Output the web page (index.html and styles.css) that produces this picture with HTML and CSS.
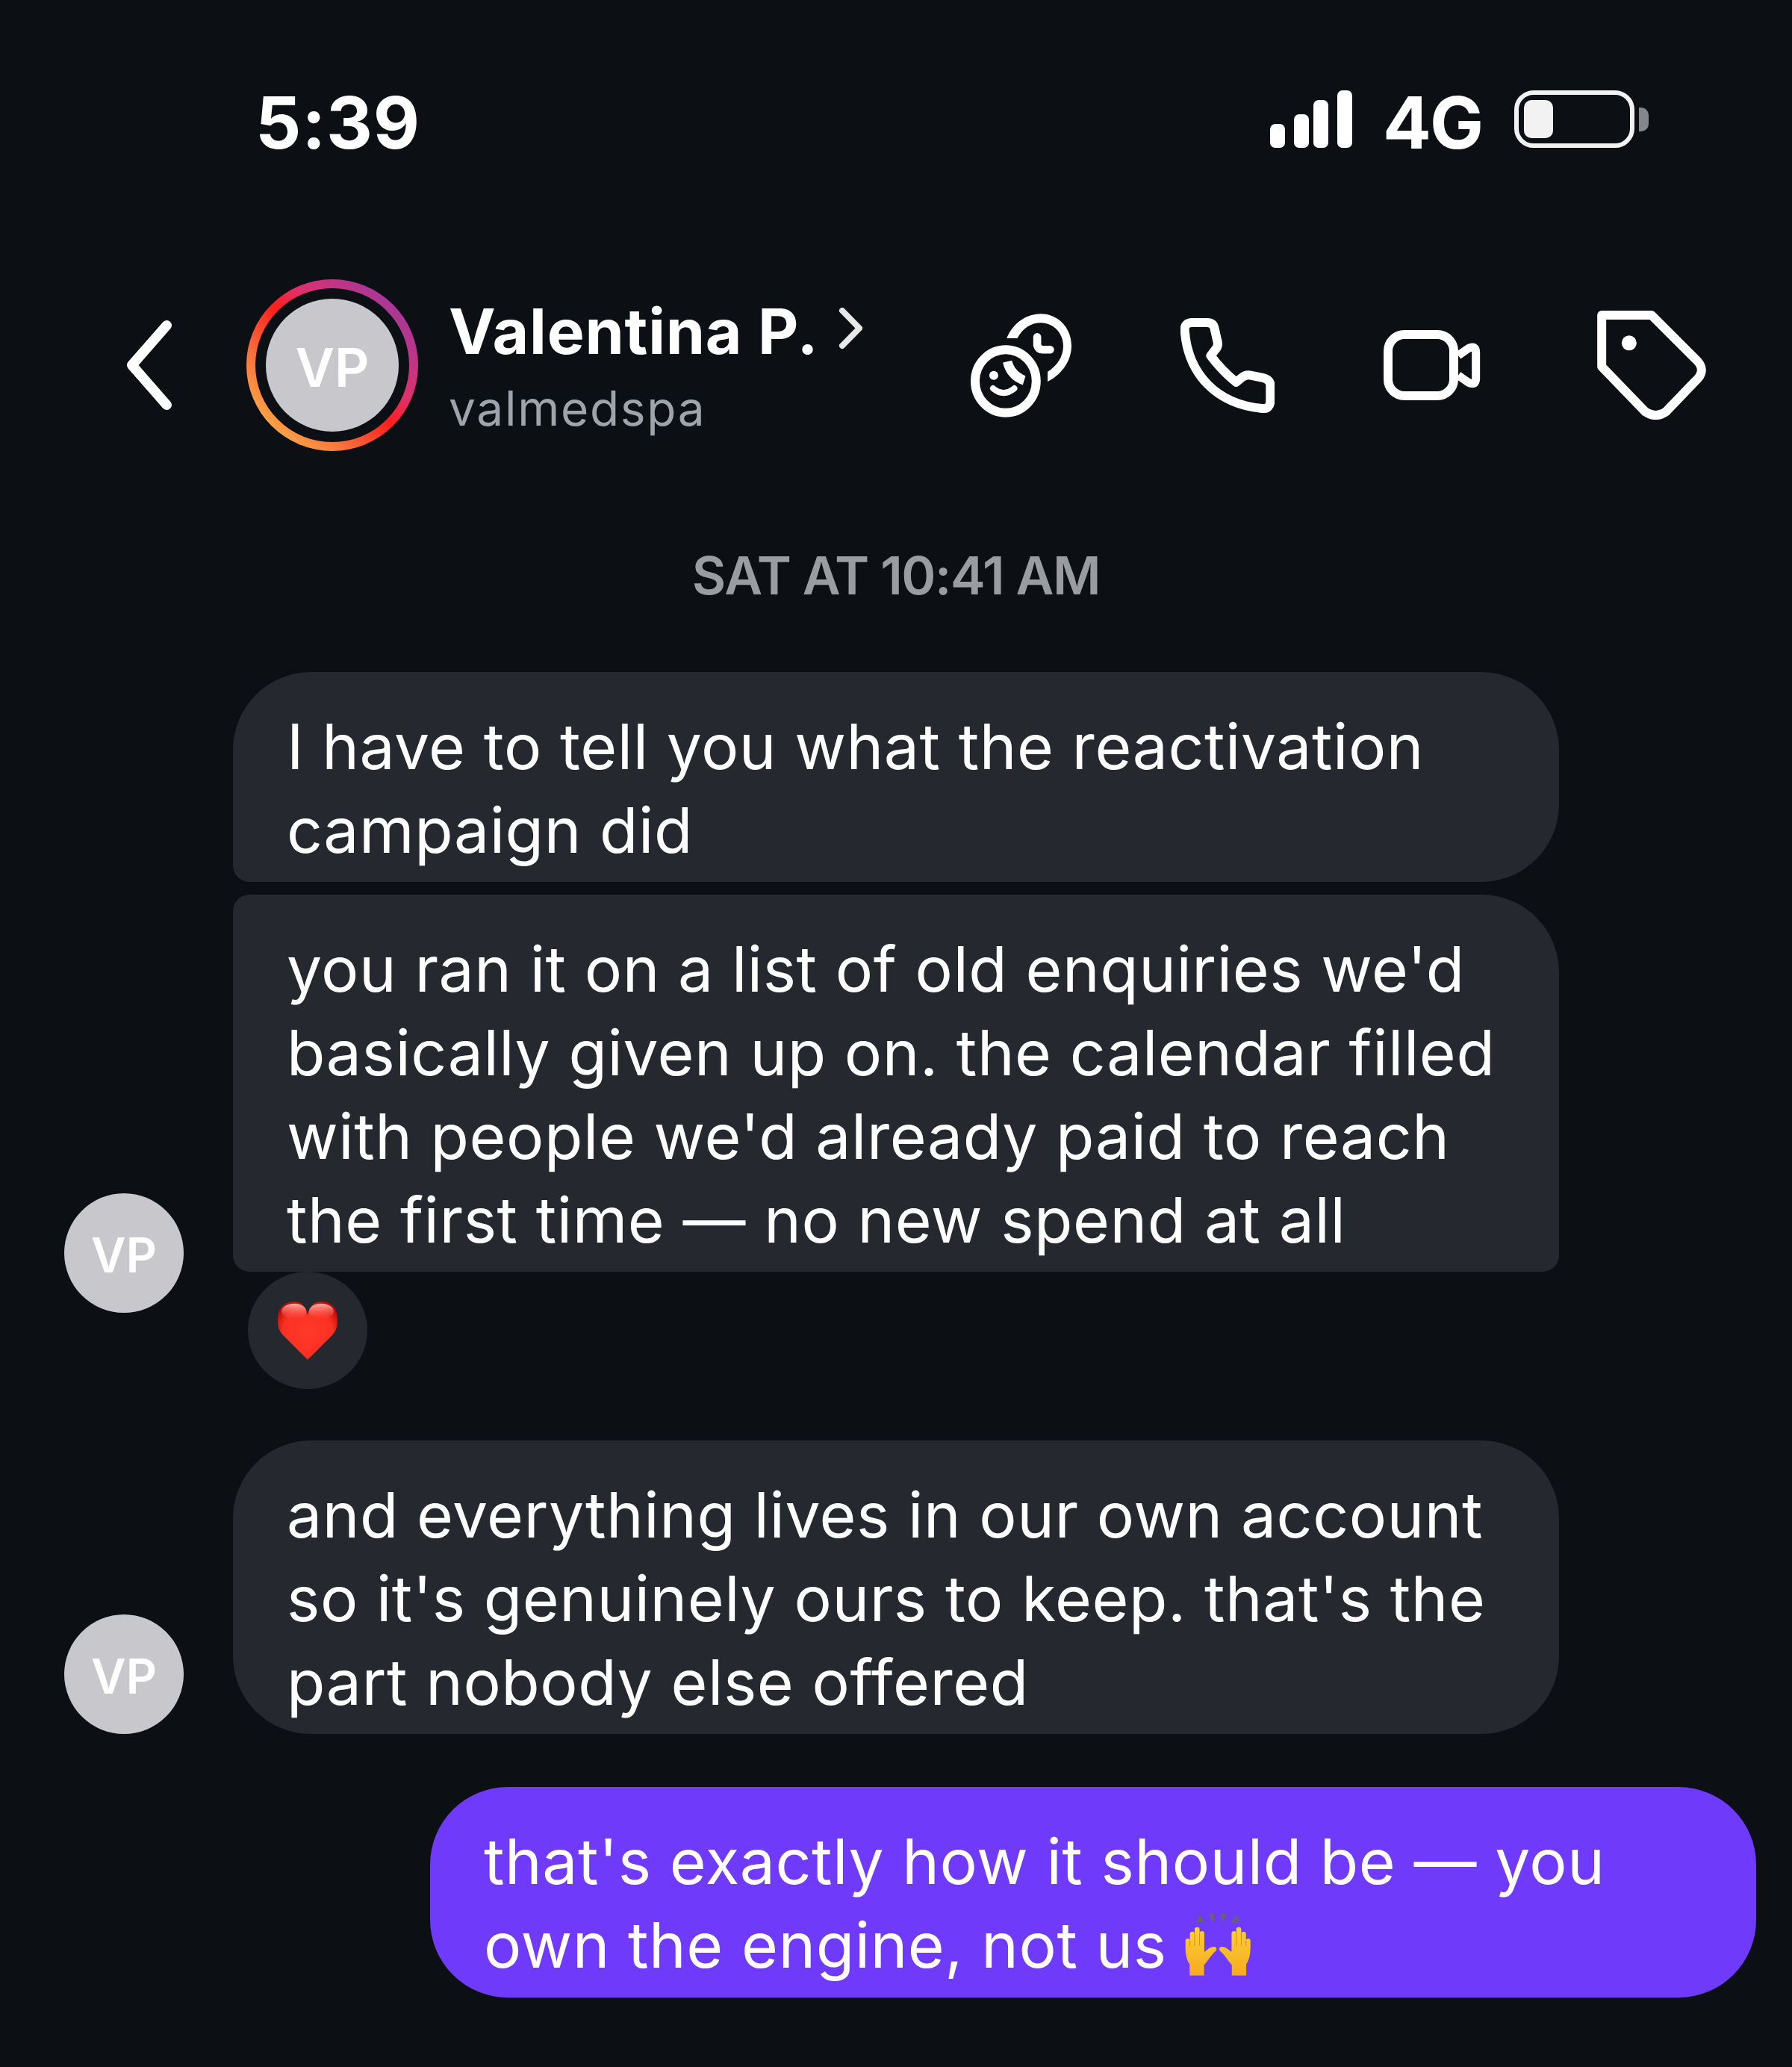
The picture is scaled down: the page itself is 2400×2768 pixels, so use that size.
FILE: index.html
```html
<!DOCTYPE html>
<html lang="en">
<head>
  <meta charset="UTF-8">
  <meta name="viewport" content="width=device-width, initial-scale=1.0">
  <title>Valentina P.</title>
  <link rel="stylesheet" href="styles.css">
</head>
<body>
  <div class="status">
    <span class="time">5:39</span>
    <div class="signal">
      <i class="bar bar-1"></i><i class="bar bar-2"></i><i class="bar bar-3"></i><i class="bar bar-4"></i>
    </div>
    <span class="net">4G</span>
    <div class="battery"><i class="level"></i></div>
    <i class="nub"></i>
  </div>

  <header class="head">
    <svg class="back" viewBox="60 210 180 360" width="60" height="120"><path d="M220 230 80 390 220 550" fill="none" stroke="#fff" stroke-width="40" stroke-linecap="round" stroke-linejoin="round"/></svg>
    <div class="ring"><div class="ring-gap"><div class="avatar avatar-big">VP</div></div></div>
    <div class="who">
      <div class="name">Valentina P.
        <svg class="name-arrow" viewBox="0 0 31 55" width="31" height="55"><path d="M4 4 27 27.500 4 51" fill="none" stroke="#e8e8e8" stroke-width="8" stroke-linecap="round" stroke-linejoin="round"/></svg>
      </div>
      <div class="handle">valmedspa</div>
    </div>
    <div class="actions">
      <svg viewBox="62 62 406 416" width="135" height="139" fill="#fff">
        <path d="M207 160C235 95 290 62 345 62 415 62 468 120 468 190 468 250 430 305 372 335V295C410 270 435 235 435 190 435 140 395 98 345 98 305 98 272 120 250 160Z"/>
        <path d="M330 155V188Q335 206 352 206H382" fill="none" stroke="#fff" stroke-width="32" stroke-linecap="round" stroke-linejoin="round"/>
        <ellipse cx="203" cy="333" rx="123" ry="127" fill="none" stroke="#fff" stroke-width="36"/>
        <circle cx="155" cy="310" r="18"/>
        <path d="M152 362Q195 398 238 362" fill="none" stroke="#fff" stroke-width="24" stroke-linecap="round"/>
        <path d="M192 258 228 250C235 280 255 300 283 312L272 348C230 335 200 300 192 258Z"/>
      </svg>
      <svg viewBox="905 75 377 380" width="126" height="127"><path d="M952 93H1012Q1036 93 1041 115L1053 168Q1058 188 1044 202L1026 226Q1070 285 1128 332L1150 314Q1166 300 1186 304L1238 315Q1265 322 1265 345V405Q1265 440 1232 437C1050 420 935 300 922 125Q920 93 952 93Z" fill="none" stroke="#fff" stroke-width="36" stroke-linejoin="round"/></svg>
      <svg viewBox="100 128 390 282" width="130" height="94" fill="none" stroke="#fff" stroke-width="36">
        <rect x="118" y="146" width="264" height="246" rx="66"/>
        <path d="M400 230 440 202Q471 186 471 218V322Q471 354 440 338L400 310" stroke-width="33" stroke-linejoin="round"/>
      </svg>
      <svg class="tag" viewBox="958 50 437 438" width="146" height="146">
        <path d="M976 68H1176L1350 242Q1404 288 1350 335L1235 455Q1193 485 1150 455L976 275Z" fill="none" stroke="#fff" stroke-width="36" stroke-linejoin="round"/>
        <circle cx="1086" cy="180" r="30" fill="#fff"/>
      </svg>
    </div>
  </header>

  <div class="date">SAT AT 10:41 AM</div>

  <main class="thread">
    <div class="row">
      <div class="avatar avatar-small avatar-react">VP</div>
      <div class="stack">
        <p class="bubble bubble-first">I have to tell you what the reactivation campaign did</p>
        <p class="bubble bubble-last">you ran it on a list of old enquiries we'd basically given up on. the calendar filled with people we'd already paid to reach the first time — no new spend at all</p>
        <div class="reaction">
          <svg viewBox="930 545 240 235" width="80" height="78" role="img" aria-label="red heart">
            <defs>
              <radialGradient id="heart-fill" cx="50%" cy="52%" r="58%">
                <stop offset="0" stop-color="#ff3a2a"/>
                <stop offset=".72" stop-color="#fb2f23"/>
                <stop offset="1" stop-color="#bd0d06"/>
              </radialGradient>
              <linearGradient id="heart-shine" x1="0" y1="0" x2="0" y2="1">
                <stop offset="0" stop-color="#ffb0a8"/>
                <stop offset="1" stop-color="#ff5a4e" stop-opacity="0"/>
              </linearGradient>
            </defs>
            <path d="M1050 780 950 680C925 652 930 625 930 610 930 570 960 545 995 545 1020 545 1040 560 1050 598 1060 560 1080 545 1105 545 1140 545 1170 570 1170 610 1170 625 1175 652 1150 680Z" fill="url(#heart-fill)"/>
            <ellipse cx="995" cy="585" rx="50" ry="32" fill="url(#heart-shine)"/>
            <ellipse cx="1105" cy="585" rx="50" ry="32" fill="url(#heart-shine)"/>
          </svg>
        </div>
      </div>
    </div>

    <div class="row row-next">
      <div class="avatar avatar-small">VP</div>
      <p class="bubble">and everything lives in our own account so it's genuinely ours to keep. that's the part nobody else offered</p>
    </div>

    <div class="row row-mine">
      <p class="bubble bubble-mine">that's exactly how it should be — you own the engine, not us
        <svg class="hands" viewBox="245 187 265 253" width="88" height="85" role="img" aria-label="raising hands">
          <defs>
            <linearGradient id="hand-fill" x1="0" y1="0" x2="0" y2="1">
              <stop offset="0" stop-color="#fdd035"/>
              <stop offset="1" stop-color="#f7aa1f"/>
            </linearGradient>
            <g id="hand">
              <path d="M264 395C250 375 247 350 247 325V300A9 9 0 0 1 265 300V270A10 10 0 0 1 284 270V255A10 10 0 0 1 304 255V268A10 10 0 0 1 323 268V345C335 335 350 322 362 324 374 326 376 334 368 342 352 355 342 375 322 398V440H264Z" fill="url(#hand-fill)"/>
              <path d="M265 300V322M284 270V320M304 268V320" stroke="#cf8414" stroke-width="2.500" fill="none"/>
            </g>
          </defs>
          <use href="#hand"/>
          <use href="#hand" transform="translate(756 0) scale(-1 1)"/>
          <path d="M306 195 323 227 289 222ZM340 196 362 188 360 227ZM392 188 414 196 394 226ZM450 196 466 222 431 229Z" fill="#66646e"/>
        </svg>
      </p>
    </div>
  </main>
</body>
</html>
```

FILE: styles.css
```css
* {box-sizing: border-box;}
body {margin: 0; padding-top: 121px; background: #0c1014; color: #fff; font-family: Inter, "Liberation Sans", sans-serif;}

.status {display: flex; align-items: center; height: 77px; padding-left: 342px;}
.time, .net {padding-top: 10px; font-size: 96px; font-weight: 700; line-height: 77px; white-space: nowrap;}
.time {letter-spacing: .8px;}
.signal {display: flex; align-items: flex-end; gap: 12px; height: 77px; margin-left: auto;}
.bar {display: block; width: 20px; background: #fff; border-radius: 7px;}
.bar-1 {height: 32px;}
.bar-2 {height: 45px;}
.bar-3 {height: 64px; margin-left: -6px;}
.bar-4 {height: 77px;}
.net {width: 128px; margin-left: 41px; letter-spacing: -2px;}
.battery {width: 161px; height: 77px; margin-left: 48px; padding: 7px; border: 6px solid #f2f2f2; border-radius: 26px;}
.level {display: block; width: 39px; height: 51px; background: #f2f2f2; border-radius: 10px;}
.nub {width: 13px; height: 32px; margin: 0 192px 0 6px; background: #86878b; border-radius: 0 10px 10px 0;}

.head {display: flex; align-items: center; margin-top: 176px; padding-left: 170px;}
.back {flex: none;}
.ring {flex: none; width: 230px; height: 230px; margin-left: 100px; padding: 12px; border-radius: 50%; background: linear-gradient(45deg, #fdb04a 10%, #f8703c 30%, #fd1d1d 50%, #e1306c 62%, #c13584 75%, #833ab4 100%);}
.ring-gap {height: 100%; padding: 14px; border-radius: 50%; background: #0c1014;}
.avatar {display: flex; align-items: center; justify-content: center; flex: none; padding-top: 4px; border-radius: 50%; background: #c8c7cb; color: #fff; font-weight: 600;}
.avatar-big {width: 178px; height: 178px; font-size: 72px;}
.avatar-small {width: 160px; height: 160px; font-size: 64px;}
.avatar-react {margin-bottom: 102px;}
.who {margin-top: 6px; margin-left: 41px;}
.name {display: flex; align-items: center; height: 84px; font-size: 84px; font-weight: 700; letter-spacing: .8px;}
.name-arrow {margin: -8px 0 0 28px;}
.handle {margin-top: 25px; font-size: 64px; line-height: 72px; letter-spacing: 1.700px; color: #9fa3ab;}
.actions {display: flex; align-items: center; gap: 146px; margin-left: auto; padding-right: 115px;}
.tag {margin-left: 10px;}

.date {margin-top: 125px; font-size: 70px; font-weight: 600; line-height: 84px; letter-spacing: -1.400px; text-align: center; color: #9a9ca1;}

.thread {display: flex; flex-direction: column; margin-top: 87px; padding: 0 48px 0 86px;}
.row {display: flex; align-items: flex-end; gap: 66px;}
.row-next {margin-top: 69px;}
.row-mine {justify-content: flex-end; margin-top: 71px;}
.stack {display: flex; flex-direction: column;}
.bubble {width: 1776px; margin: 0; padding: 44px 72px 13px; border-radius: 104px; background: #25282f; font-size: 84px; line-height: 112px; letter-spacing: .55px;}
.bubble-first {border-bottom-left-radius: 22px;}
.bubble-last {margin-top: 17px; border-radius: 22px 104px 22px 22px;}
.bubble-mine {padding-bottom: 14px; background: #703afa;}
.hands {vertical-align: -11px;}
.reaction {display: flex; align-items: center; justify-content: center; width: 160px; height: 157px; margin-left: 20px; border-radius: 50%; background: #25282f;}
```
